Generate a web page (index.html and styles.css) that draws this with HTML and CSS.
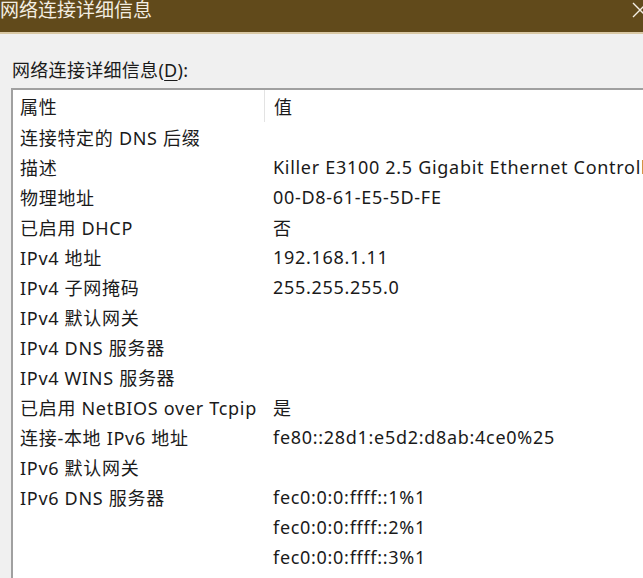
FILE: index.html
```html
<!DOCTYPE html>
<html>
<head>
<meta charset="utf-8">
<link rel="stylesheet" href="styles.css">
</head>
<body>
<div class="window">
  <div class="titlebar">
    <span class="title">网络连接详细信息</span>
    <svg class="close" width="16" height="16" viewBox="0 0 16 16"><path d="M1 1 L15 15 M15 1 L1 15" stroke="#f4efe4" stroke-width="1.4" fill="none"/></svg>
  </div>
  <div class="content">
    <div class="label">网络连接详细信息(<u>D</u>):</div>
    <div class="list">
      <div class="row head"><div class="c1">属性</div><div class="c2">值</div></div>
      <div class="row"><div class="c1">连接特定的 DNS 后缀</div><div class="c2"></div></div>
      <div class="row"><div class="c1">描述</div><div class="c2">Killer E3100 2.5 Gigabit Ethernet Controller</div></div>
      <div class="row"><div class="c1">物理地址</div><div class="c2">00-D8-61-E5-5D-FE</div></div>
      <div class="row"><div class="c1">已启用 DHCP</div><div class="c2">否</div></div>
      <div class="row"><div class="c1">IPv4 地址</div><div class="c2">192.168.1.11</div></div>
      <div class="row"><div class="c1">IPv4 子网掩码</div><div class="c2">255.255.255.0</div></div>
      <div class="row"><div class="c1">IPv4 默认网关</div><div class="c2"></div></div>
      <div class="row"><div class="c1">IPv4 DNS 服务器</div><div class="c2"></div></div>
      <div class="row"><div class="c1">IPv4 WINS 服务器</div><div class="c2"></div></div>
      <div class="row"><div class="c1">已启用 NetBIOS over Tcpip</div><div class="c2">是</div></div>
      <div class="row"><div class="c1">连接-本地 IPv6 地址</div><div class="c2">fe80::28d1:e5d2:d8ab:4ce0%25</div></div>
      <div class="row"><div class="c1">IPv6 默认网关</div><div class="c2"></div></div>
      <div class="row"><div class="c1">IPv6 DNS 服务器</div><div class="c2">fec0:0:0:ffff::1%1</div></div>
      <div class="row"><div class="c1"></div><div class="c2">fec0:0:0:ffff::2%1</div></div>
      <div class="row"><div class="c1"></div><div class="c2">fec0:0:0:ffff::3%1</div></div>
    </div>
  </div>
</div>
</body>
</html>
```
FILE: styles.css
```css
html, body {
  margin: 0;
  padding: 0;
  background: #f0f0f0;
  overflow: hidden;
}
body {
  width: 643px;
  height: 578px;
  font-family: "Noto Sans", "Noto Sans CJK SC", sans-serif;
  color: #1a1a1a;
}
.window {
  display: flex;
  flex-direction: column;
  height: 578px;
}
.titlebar {
  height: 34px;
  background: #614a1b;
  border-bottom: 2px solid #d9c8a4;
  display: flex;
  align-items: flex-start;
  justify-content: space-between;
  box-sizing: border-box;
}
.title {
  color: #f3eee2;
  font-size: 19px;
  line-height: 22px;
  margin-top: -1px;
}
.close {
  margin-top: 2px;
  margin-right: -5px;
}
.content {
  padding: 24px 0 0 11px;
  flex: 1;
  display: flex;
  flex-direction: column;
}
.label {
  font-size: 18px;
  line-height: 24px;
  padding-left: 1px;
  margin-bottom: 6px;
  letter-spacing: 0.3px;
}
.label u {
  text-decoration-thickness: 1px;
  text-underline-offset: 3px;
}
.list {
  flex: 1;
  background: #ffffff;
  border-left: 2px solid #a0a0a0;
  border-top: 2px solid #a0a0a0;
  font-size: 18px;
  letter-spacing: 0.7px;
  overflow: hidden;
}
.row {
  display: flex;
  height: 30px;
  align-items: center;
  white-space: nowrap;
}
.row.head {
  height: 32px;
}
.c1 {
  box-sizing: border-box;
  width: 251px;
  padding-left: 7px;
  flex: none;
}
.c2 {
  padding-left: 9px;
  flex: none;
}
.head .c2 {
  border-left: 1px solid #e3e3e3;
  align-self: stretch;
  display: flex;
  align-items: center;
}
```
